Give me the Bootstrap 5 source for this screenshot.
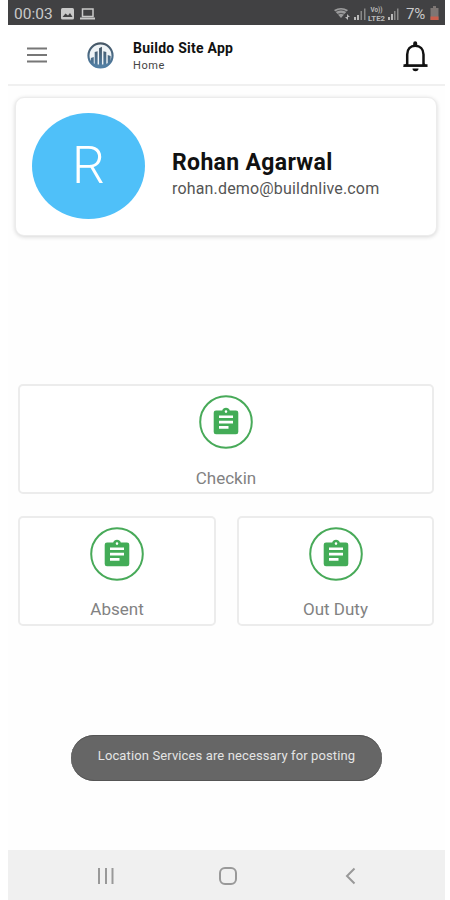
<!DOCTYPE html>
<html lang="en">
<head>
<meta charset="utf-8">
<meta name="viewport" content="width=device-width, initial-scale=1">
<title>Buildo Site App</title>
<link href="https://cdn.jsdelivr.net/npm/bootstrap@5.3.0/dist/css/bootstrap.min.css" rel="stylesheet">
<style>
body{font-family:Roboto,"Liberation Sans",sans-serif;background:#fff;overflow:hidden}
svg{display:block;flex:none}
.phone{width:437px;height:900px;margin-left:8px;background:#fefefe}
.status{height:25px;background:#414143;color:#c9c9c9;padding:3px 6px 0 6px;font-size:15.5px;line-height:22px}
.clock{width:41px}
.pct{font-size:15px;width:21px;margin-left:6px;letter-spacing:-.2px}
.batt{margin-left:3px;margin-top:-2px}
.app-head{height:61px;background:#fff;border-bottom:2px solid #f0f0f0;padding:0 16px 0 18px}
.logo{margin-left:39px}
.app-name{margin-left:19px;padding-top:4px}
.app-title{font-size:14px;line-height:18px;font-weight:700;color:#111;letter-spacing:.25px}
.app-sub{font-size:11px;line-height:16px;color:#444;letter-spacing:.6px;margin-top:1px}
.profile{height:139px;margin:11px 8px 0 7px;border:1px solid #ececec;border-radius:9px;box-shadow:0 1px 4px rgba(0,0,0,.16);padding:0 0 0 16px;background:#fff}
.avatar{width:113px;height:106px;border-radius:50%;background:#4fc0f9;color:#fff;font-size:52px;font-weight:300;line-height:106px;margin-top:-1px}
.who{margin-left:27px;padding-top:15px}
.who-name{font-size:23px;line-height:28px;font-weight:700;color:#111;letter-spacing:.33px}
.who-mail{font-size:16px;line-height:22px;color:#555;margin-top:1px;letter-spacing:.17px}
.tiles{margin:148px 11px 0 10px;row-gap:22px;column-gap:21px;display:grid;grid-template-columns:198px 197px}
.tile{height:110px;border:2px solid #ececec;border-radius:5px;background:#fff;padding-top:9px}
.wide{grid-column:1/3}
.tile-label{font-size:17px;line-height:22px;color:#828282;margin-top:18px}
.tile:not(.wide) .tile-label{margin-top:17px}
.snack{width:311px;height:46px;margin:109px 0 0 63px;background:#666;border-radius:23px;color:#e4e4e4;font-size:13px;letter-spacing:.12px;line-height:42px;box-shadow:inset 0 1px #555,inset 0 -1px #555}
.sysnav{height:50px;background:#f0f0f0;padding:2px 89px 0 89px}
.home-key{margin-right:3px}
</style>
</head>
<body>
<svg width="0" height="0" class="position-absolute"><defs>
<symbol id="clip" viewBox="0 0 54 54"><circle cx="27" cy="27" r="25.8" fill="#fff" stroke="#48aa59" stroke-width="2"/><path fill="#43ac57" fill-rule="evenodd" d="M17 15.500h6.200a4 4 0 0 1 7.600 0H37a2.300 2.300 0 0 1 2.300 2.300V37a2.300 2.300 0 0 1-2.300 2.300H17a2.300 2.300 0 0 1-2.300-2.300V17.800a2.300 2.300 0 0 1 2.300-2.300zM27 15.300a1.300 1.300 0 1 0 0 2.600 1.300 1.300 0 0 0 0-2.600zM20 20.500v2.600h14v-2.600zM20 25.800v2.600h14v-2.600zM20 31.100v2.600h9.500v-2.600z"/></symbol>
</defs></svg>
<div class="phone d-flex flex-column">
  <div class="status d-flex align-items-center">
    <span class="clock">00:03</span>
    <svg class="ms-1" width="36" height="14" viewBox="0 0 36 14"><rect x="2" y="1" width="13" height="11.500" rx="1.500" fill="#c9c9c9"/><path d="M3.500 10l3-3.500 2.500 2 2-2.500 2.500 4z" fill="#414143"/><rect x="23.500" y="2" width="10.500" height="7.500" fill="none" stroke="#c9c9c9" stroke-width="1.500"/><path d="M21 11.500h15" stroke="#c9c9c9" stroke-width="2"/></svg>
    <svg class="ms-auto" width="66" height="18" viewBox="0 0 66 18"><g fill="#b9b9b9"><path d="M0 5q7-4 14 0L7 13z" opacity=".75"/><path d="M13 9l3 3h-2v3l-3-3h2zM20 12h2v3h-2zM23 10h2v5h-2z"/><path opacity=".6" d="M26.500 6h1.500v9h-1.500zM30 3.500h1.500V15H30zM63 3.500h1.500V15H63z"/><path d="M54 12h2v3h-2zM57 9h2v6h-2z"/><path opacity=".6" d="M60 6h1.500v9H60z"/><text x="36.500" y="7" font-size="6.500" font-weight="700" textLength="12" lengthAdjust="spacingAndGlyphs">Vo))</text><text x="34" y="15.500" font-size="7" font-weight="700" textLength="17" lengthAdjust="spacingAndGlyphs">LTE2</text></g><path d="M1 7q6-4 12 0M3 9.500q4-2.500 8 0" fill="none" stroke="#414143" stroke-width=".8"/></svg>
    <span class="pct">7%</span>
    <svg width="9" height="14" viewBox="0 0 9 14" class="batt"><path d="M3 0h3v2h2.500v12h-8V2H3z" fill="#7d7674"/><path d="M.5 10.500h8V14h-8z" fill="#c95f4d"/></svg>
  </div>
  <div class="app-head d-flex align-items-center">
    <svg width="22" height="18" viewBox="0 0 22 18"><path d="M1 2.500h20M1 9h20M1 15.500h20" stroke="#777" stroke-width="2"/></svg>
    <svg class="logo" width="27" height="28" viewBox="0 0 28 28"><defs><linearGradient id="lg" x2="0" y2="1"><stop stop-color="#465766"/><stop offset="1" stop-color="#4f7fa6"/></linearGradient></defs><circle cx="14" cy="14.500" r="12.500" fill="#eef3f6" stroke="url(#lg)" stroke-width="2.200"/><path d="M4 17l3-1v9l-3-3zM8 11l3-1v16l-3-1zM12.500 7l3-1.500V27h-3zM17 10l3 1v14l-3 1zM21.500 14l3 1v6l-3 3z" fill="url(#lg)"/><path d="M5 22q9 4 18 0-3 5-9 5t-9-5z" fill="#547fa2"/></svg>
    <div class="app-name flex-grow-1"><div class="app-title">Buildo Site App</div><div class="app-sub">Home</div></div>
    <svg width="28" height="34" viewBox="0 0 28 34"><path d="M2.500 27.500h24M6.200 27V16.500c0-5.500 3.200-8.800 8-8.800s8.300 3.300 8.300 8.800V27" fill="none" stroke="#111" stroke-width="2.500"/><path d="M12.200 8V5.300a2 2 0 0 1 4 0V8zM11.500 30.500h6a3 2.800 0 0 1-6 0zM2 28.700l4.200-4.200v3h16.300v-3l4.200 4.200z" fill="#111"/></svg>
  </div>
  <div class="profile d-flex align-items-center">
    <div class="avatar text-center">R</div>
    <div class="who"><div class="who-name">Rohan Agarwal</div><div class="who-mail">rohan.demo@buildnlive.com</div></div>
  </div>
  <div class="tiles">
    <div class="tile wide d-flex flex-column align-items-center"><svg width="54" height="54"><use href="#clip"/></svg><div class="tile-label">Checkin</div></div>
    <div class="tile d-flex flex-column align-items-center"><svg width="54" height="54"><use href="#clip"/></svg><div class="tile-label">Absent</div></div>
    <div class="tile d-flex flex-column align-items-center"><svg width="54" height="54"><use href="#clip"/></svg><div class="tile-label">Out Duty</div></div>
  </div>
  <div class="snack text-center" role="status">Location Services are necessary for posting</div>
  <div class="sysnav d-flex align-items-center justify-content-between mt-auto">
    <svg width="18" height="18" viewBox="0 0 18 18"><path d="M2 1v16M9 1v16M15.500 1v16" stroke="#999" stroke-width="2"/></svg>
    <svg class="home-key" width="20" height="20" viewBox="0 0 20 20"><rect x="2" y="2" width="16" height="16" rx="5" fill="none" stroke="#999" stroke-width="2"/></svg>
    <svg width="12" height="18" viewBox="0 0 12 18"><path d="M10.500 1.500L3 9l7.500 7.500" fill="none" stroke="#999" stroke-width="2"/></svg>
  </div>
</div>
<script src="https://cdn.jsdelivr.net/npm/bootstrap@5.3.0/dist/js/bootstrap.bundle.min.js"></script>
</body>
</html>
